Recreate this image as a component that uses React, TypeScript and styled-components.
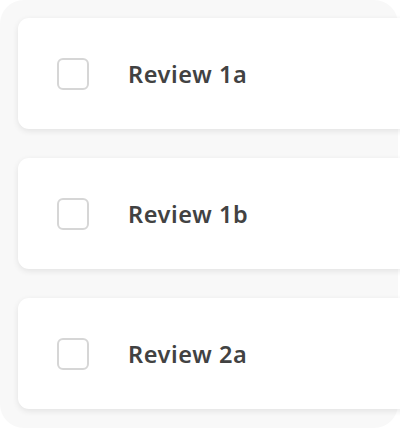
import styled, { createGlobalStyle } from "styled-components";

const GlobalStyle = createGlobalStyle`
  html, body {
    margin: 0;
    padding: 0;
    background: #ffffff;
    overflow: hidden;
  }

  * {
    box-sizing: border-box;
  }
`;

const Panel = styled.div`
  display: flex;
  flex-direction: column;
  gap: 29px;
  width: 398px;
  height: 428px;
  padding: 18px 0 19px 18px;
  background-color: #f8f8f8;
  border-radius: 24px;
`;

const Card = styled.label`
  display: flex;
  align-items: center;
  gap: 39px;
  width: 400px;
  height: 111px;
  padding-left: 39px;
  background-color: #ffffff;
  border-radius: 11px;
  box-shadow: 0 2px 6px rgba(0, 0, 0, 0.09);
  cursor: pointer;
`;

const Box = styled.span`
  flex: none;
  width: 32px;
  height: 32px;
  border: 2px solid #d6d6d6;
  border-radius: 6px;
  background-color: #ffffff;
`;

const Label = styled.span`
  font-family: "Noto Sans", "Open Sans", sans-serif;
  font-size: 23.5px;
  font-weight: 600;
  color: #424242;
  letter-spacing: 0.6px;
`;

const items = ["Review 1a", "Review 1b", "Review 2a"];

const App = () => {
  return (
    <>
      <GlobalStyle />
      <Panel>
        {items.map((item) => (
          <Card key={item}>
            <Box />
            <Label>{item}</Label>
          </Card>
        ))}
      </Panel>
    </>
  );
};

export default App;
